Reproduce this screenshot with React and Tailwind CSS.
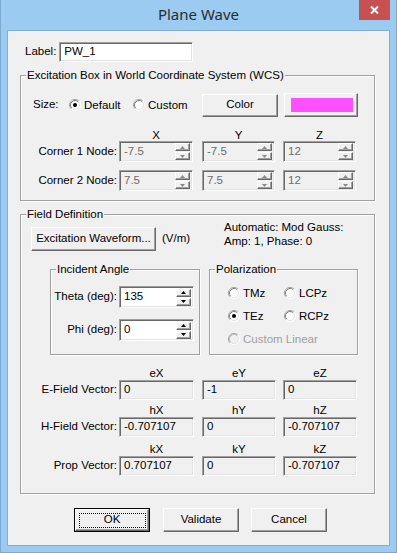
import React from 'react';

/* ── Classic Win32 bevels ─────────────────────────────── */
const SUNKEN =
  'border border-t-[#a0a0a0] border-l-[#a0a0a0] border-b-white border-r-white shadow-[inset_1px_1px_0_#696969,inset_-1px_-1px_0_#e3e3e3]';
const RAISED =
  'border border-t-white border-l-white border-b-[#696969] border-r-[#696969] shadow-[inset_-1px_-1px_0_#a0a0a0,inset_1px_1px_0_#f0f0f0] bg-[#f0f0f0]';

const Group = ({ title, className, children }) => (
  <div className={`relative border border-[#a0a0a0] shadow-[inset_1px_1px_0_#ffffff,1px_1px_0_#ffffff] ${className}`}>
    <span className="absolute -top-[7px] left-[5px] bg-[#f0f0f0] px-[1px] leading-[13px] whitespace-nowrap">
      {title}
    </span>
    {children}
  </div>
);

const Arrow = ({ up, disabled }) => (
  <svg width="5" height="3" viewBox="0 0 5 3">
    <polygon points={up ? '0,3 2.5,0 5,3' : '0,0 5,0 2.5,3'} fill={disabled ? '#8a8a8a' : '#000'} />
  </svg>
);

const Spin = ({ value, disabled, className }) => (
  <div className={`flex items-center ${SUNKEN} ${disabled ? 'bg-[#f0f0f0] text-[#6d6d6d]' : 'bg-white text-black'} ${className}`}>
    <span className="flex-1 pl-[4px] leading-none">{value}</span>
    <div className="flex flex-col gap-[1px] mr-[2px]">
      <div className={`w-[15px] h-[8px] flex items-center justify-center ${RAISED}`}><Arrow up disabled={disabled} /></div>
      <div className={`w-[15px] h-[8px] flex items-center justify-center ${RAISED}`}><Arrow disabled={disabled} /></div>
    </div>
  </div>
);

const Field = ({ value, className }) => (
  <div className={`flex items-center bg-[#f0f0f0] pl-[4px] ${SUNKEN} ${className}`}>{value}</div>
);

const Radio = ({ label, checked, disabled }) => (
  <span className={`flex items-center leading-[14px] ${disabled ? 'text-[#a0a0a0]' : 'text-black'}`}>
    <svg width="12" height="12" viewBox="0 0 12 12" className="shrink-0">
      <circle cx="6" cy="6" r="5" fill={disabled ? '#f0f0f0' : '#ffffff'} />
      <path d="M2.11 9.89 A5.5 5.5 0 0 1 9.89 2.11" fill="none" stroke="#a0a0a0" />
      <path d="M2.82 9.18 A4.5 4.5 0 0 1 9.18 2.82" fill="none" stroke={disabled ? '#b8b8b8' : '#808080'} />
      <path d="M9.89 2.11 A5.5 5.5 0 0 1 2.11 9.89" fill="none" stroke="#ffffff" />
      <path d="M9.18 2.82 A4.5 4.5 0 0 1 2.82 9.18" fill="none" stroke="#e3e3e3" />
      {checked && <circle cx="6" cy="6" r="2" fill="#000" />}
    </svg>
    <span className="ml-[3px]">{label}</span>
  </span>
);

const Button = ({ children, className, isDefault }) =>
  isDefault ? (
    <div className={`border border-black ${className}`}>
      <div className={`h-full flex items-center justify-center ${RAISED}`}>
        <span className="w-[67px] h-[15px] border border-dotted border-black flex items-center justify-center">{children}</span>
      </div>
    </div>
  ) : (
    <div className={`flex items-center justify-center ${RAISED} ${className}`}>{children}</div>
  );

/* ── Vector rows ──────────────────────────────────────── */
const VECTORS = [
  { label: 'E-Field Vector:', heads: ['eX', 'eY', 'eZ'], vals: ['0', '-1', '0'], mt: 'mt-[12px]' },
  { label: 'H-Field Vector:', heads: ['hX', 'hY', 'hZ'], vals: ['-0.707107', '0', '-0.707107'], mt: 'mt-[4px]' },
  { label: 'Prop Vector:', heads: ['kX', 'kY', 'kZ'], vals: ['0.707107', '0', '-0.707107'], mt: 'mt-[6px]' },
];

export default function App() {
  return (
    <div
      className="w-[397px] h-[553px] bg-[#9ccbf1] border-x border-b border-[#7ea9d3] flex flex-col text-[11.5px] text-black"
      style={{ fontFamily: '"Liberation Sans", Arial, sans-serif' }}
    >
      {/* Title bar */}
      <div className="relative h-[30px] flex items-center justify-center shrink-0">
        <span className="text-[15px] text-[#2b2b2b] -mt-[1px]" style={{ fontFamily: '"Noto Sans", sans-serif' }}>
          Plane Wave
        </span>
        <div className="absolute right-[6px] top-0 w-[31px] h-[20px] bg-[#c75050] flex items-center justify-center">
          <svg width="9" height="8" viewBox="0 0 9 8">
            <path d="M1 0.5 L8 7.5 M8 0.5 L1 7.5" stroke="#fff" strokeWidth="2" />
          </svg>
        </div>
      </div>

      {/* Client area */}
      <div className="flex-1 mx-[6px] mb-[6px] border border-[#83acd4] bg-[#f0f0f0] flex flex-col">
        {/* Label */}
        <div className="flex items-center mt-[11px] pl-[17px]">
          <span>Label:</span>
          <div className={`ml-[3px] w-[134px] h-[20px] bg-white flex items-center pl-[4px] ${SUNKEN}`}>PW_1</div>
        </div>

        {/* Excitation box */}
        <Group title="Excitation Box in World Coordinate System (WCS)" className="mt-[13px] ml-[12px] w-[355px]">
          <div className="flex items-center pt-[17px] pl-[12px]">
            <span className="w-[36px]">Size:</span>
            <span className="w-[64px]"><Radio label="Default" checked /></span>
            <span className="w-[69px]"><Radio label="Custom" /></span>
            <Button className="w-[76px] h-[23px]">Color</Button>
            <div className={`ml-[6px] w-[74px] h-[24px] ${RAISED} pt-[4px] pb-[4px] pl-[6px] pr-[4px]`}>
              <div className="w-full h-full bg-[#ff50ff]" />
            </div>
          </div>

          <div className="flex mt-[12px] leading-[12px] h-[12px]">
            <span className="w-[98px]" />
            <span className="w-[74px] text-center">X</span>
            <span className="w-[9px]" />
            <span className="w-[73px] text-center">Y</span>
            <span className="w-[8px]" />
            <span className="w-[73px] text-center">Z</span>
          </div>
          {[
            ['Corner 1 Node:', '-7.5', '-7.5', '12', ''],
            ['Corner 2 Node:', '7.5', '7.5', '12', 'mt-[8px]'],
          ].map(([label, x, y, z, mt]) => (
            <div key={label} className={`flex items-center ${mt}`}>
              <span className="w-[96px] text-right">{label}</span>
              <Spin value={x} disabled className="ml-[2px] w-[74px] h-[21px]" />
              <Spin value={y} disabled className="ml-[9px] w-[73px] h-[21px]" />
              <Spin value={z} disabled className="ml-[8px] w-[73px] h-[21px]" />
            </div>
          ))}
          <div className="h-[9px]" />
        </Group>

        {/* Field definition */}
        <Group title="Field Definition" className="mt-[13px] ml-[12px] w-[355px]">
          <div className="flex pt-[5px]">
            <div className="w-[203px] pl-[10px] pt-[7px] flex items-center">
              <Button className="w-[125px] h-[24px]">Excitation Waveform...</Button>
              <span className="ml-[6px]">(V/m)</span>
            </div>
            <div className="leading-[14px]">
              <div>Automatic: Mod Gauss:</div>
              <div>Amp: 1, Phase: 0</div>
            </div>
          </div>

          <div className="flex mt-[18px] pl-[29px]">
            <Group title="Incident Angle" className="w-[150px] h-[86px]">
              <div className="flex items-center mt-[16px]">
                <span className="w-[66px] text-right">Theta (deg):</span>
                <Spin value="135" className="ml-[2px] w-[75px] h-[22px]" />
              </div>
              <div className="flex items-center mt-[11px]">
                <span className="w-[66px] text-right">Phi (deg):</span>
                <Spin value="0" className="ml-[2px] w-[75px] h-[22px]" />
              </div>
            </Group>
            <Group title="Polarization" className="ml-[9px] w-[149px] h-[86px]">
              <div className="pl-[18px] pt-[16px] flex flex-col gap-[9px]">
                <div className="flex">
                  <span className="w-[56px]"><Radio label="TMz" /></span>
                  <Radio label="LCPz" />
                </div>
                <div className="flex">
                  <span className="w-[56px]"><Radio label="TEz" checked /></span>
                  <Radio label="RCPz" />
                </div>
                <Radio label="Custom Linear" disabled />
              </div>
            </Group>
          </div>

          {VECTORS.map(v => (
            <div key={v.label}>
              <div className={`flex ${v.mt} h-[13px] leading-[13px]`}>
                <span className="w-[98px]" />
                <span className="w-[75px] text-center">{v.heads[0]}</span>
                <span className="w-[8px]" />
                <span className="w-[74px] text-center">{v.heads[1]}</span>
                <span className="w-[7px]" />
                <span className="w-[74px] text-center">{v.heads[2]}</span>
              </div>
              <div className="flex items-center">
                <span className="w-[96px] text-right">{v.label}</span>
                <Field value={v.vals[0]} className="ml-[2px] w-[75px] h-[20px]" />
                <Field value={v.vals[1]} className="ml-[8px] w-[74px] h-[20px]" />
                <Field value={v.vals[2]} className="ml-[7px] w-[74px] h-[20px]" />
              </div>
            </div>
          ))}
          <div className="h-[17px]" />
        </Group>

        {/* Dialog buttons */}
        <div className="flex mt-[14px] pl-[66px]">
          <Button isDefault className="w-[76px] h-[24px]">OK</Button>
          <Button className="ml-[13px] w-[76px] h-[24px]">Validate</Button>
          <Button className="ml-[12px] w-[76px] h-[24px]">Cancel</Button>
        </div>
      </div>
    </div>
  );
}
